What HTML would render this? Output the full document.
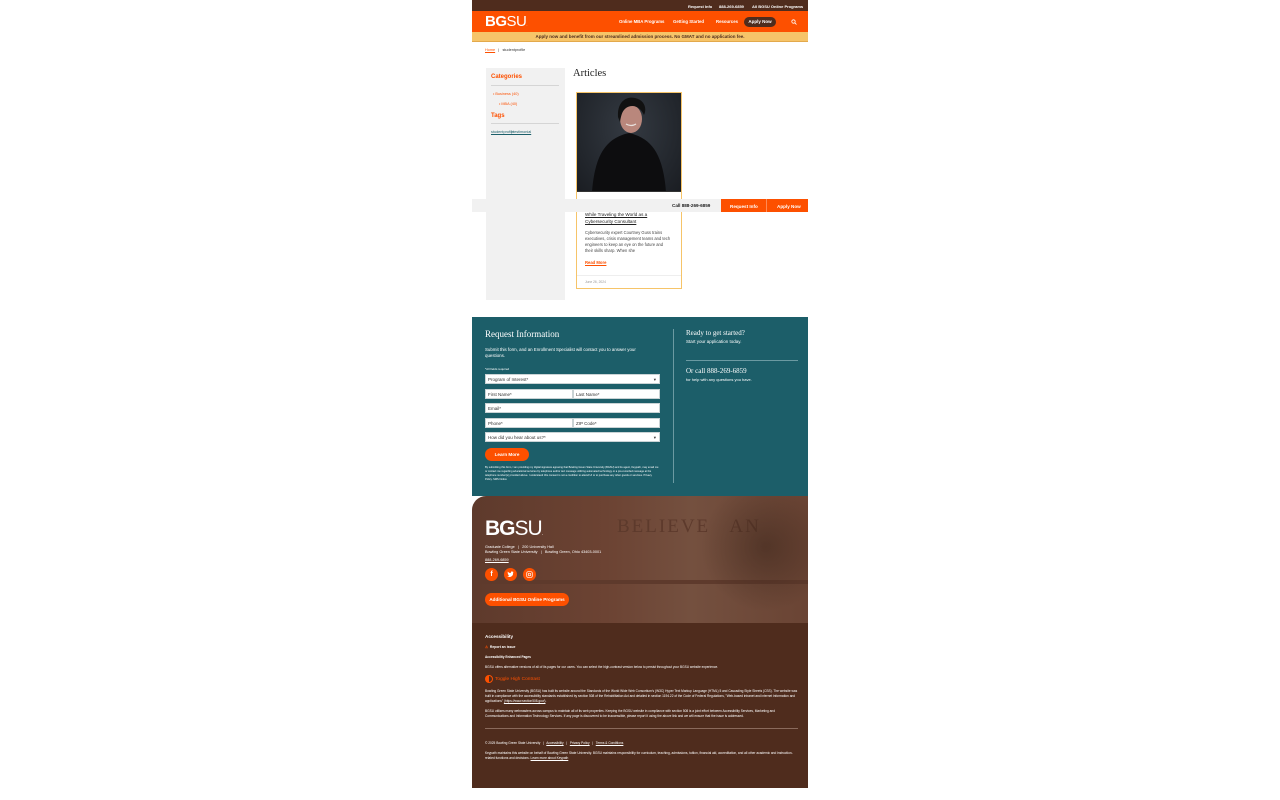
<!DOCTYPE html>
<html><head><meta charset="utf-8"><style>
*{margin:0;padding:0;box-sizing:border-box}
body{width:1280px;height:800px;background:#fff;font-family:"Liberation Sans",sans-serif;position:relative;overflow:hidden}
.a{position:absolute}
.serif{font-family:"Liberation Serif",serif}
.t{font-size:4px;color:#fff;white-space:nowrap}
input,.f{position:absolute;background:#fff;border:1px solid #c9d3d5;height:10px;font-size:4.5px;color:#333;padding-left:2px;line-height:9px}
</style></head><body>
<!-- top bar -->
<div class="a" style="left:472px;top:0;width:336px;height:11px;background:#4f2c1d"></div>
<div class="a t" style="left:688px;top:3.5px;font-weight:bold">Request Info</div>
<div class="a t" style="left:719px;top:3.5px;font-weight:bold">888-269-6859</div>
<div class="a t" style="left:752px;top:3.5px;font-weight:bold">All BGSU Online Programs</div>
<!-- nav -->
<div class="a" style="left:472px;top:11px;width:336px;height:21px;background:#fd5000"></div>
<div class="a" style="left:485px;top:13px;color:#fff;font-size:15px;line-height:17px;letter-spacing:-0.5px"><b>BG</b>SU<span style="font-size:4px">.</span></div>
<div class="a t" style="left:619px;top:19px;font-size:4.3px;font-weight:bold">Online MBA Programs</div>
<div class="a t" style="left:673px;top:19px;font-size:4.3px;font-weight:bold">Getting Started</div>
<div class="a t" style="left:716px;top:19px;font-size:4.3px;font-weight:bold">Resources</div>
<div class="a" style="left:744px;top:17px;width:32px;height:10px;border-radius:5px;background:#4f2c1d;color:#fff;font-size:4.5px;font-weight:bold;text-align:center;line-height:10px">Apply Now</div>
<svg class="a" style="left:791px;top:19px" width="6" height="6" viewBox="0 0 6 6"><circle cx="2.5" cy="2.5" r="1.7" stroke="#fff" stroke-width="0.8" fill="none"/><path d="M3.8 3.8L5.5 5.5" stroke="#fff" stroke-width="0.8"/></svg>
<div class="a" style="left:472px;top:32px;width:336px;height:10px;background:#f6c469;border-bottom:1px solid #e3a94c;font-size:4.5px;color:#4f2c1d;text-align:center;line-height:10px;font-weight:bold">Apply now and benefit from our streamlined admission process. No GMAT and no application fee.</div>
<!-- breadcrumb -->
<div class="a" style="left:485px;top:48px;font-size:3.8px;color:#333"><span style="color:#fd5000;text-decoration:underline">Home</span> &nbsp; | &nbsp; studentprofile</div>
<!-- sidebar -->
<div class="a" style="left:486px;top:68px;width:79px;height:232px;background:#f1f1f1"></div>
<div class="a" style="left:491px;top:74px;font-size:6px;color:#fd5000;font-weight:bold">Categories</div>
<div class="a" style="left:491px;top:85px;width:68px;height:1px;background:#d5d5d5"></div>
<div class="a" style="left:493px;top:92px;font-size:3.8px;color:#fd5000">• Business (40)</div>
<div class="a" style="left:499px;top:102px;font-size:3.8px;color:#fd5000">• MBA (40)</div>
<div class="a" style="left:491px;top:113px;font-size:6px;color:#fd5000;font-weight:bold">Tags</div>
<div class="a" style="left:491px;top:123px;width:68px;height:1px;background:#d5d5d5"></div>
<div class="a" style="left:491px;top:130px;font-size:3.8px;color:#1b5f6a;text-decoration:underline">studentprofile</div>
<div class="a" style="left:511px;top:130px;font-size:3.8px;color:#1b5f6a">| <u>testimonial</u></div>
<!-- articles -->
<div class="a serif" style="left:573px;top:68px;font-size:10.5px;color:#222">Articles</div>
<div class="a" style="left:576px;top:92px;width:106px;height:197px;border:1px solid #f6c469;background:#fff"></div>
<div class="a" style="left:577px;top:93px;width:104px;height:99px;background:radial-gradient(ellipse at 50% 35%,#343a42,#22262c 70%,#1a1d22);overflow:hidden">
<svg width="104" height="99" viewBox="0 0 104 99"><path d="M15 99 C18 60 30 45 52 40 C74 45 86 60 89 99Z" fill="#0d0d0f"/><ellipse cx="54" cy="26" rx="11" ry="14" fill="#b9877c"/><path d="M41 24 C40 8 50 3 58 5 C68 7 70 16 67 22 C63 13 55 11 49 15 C45 18 44 23 43 29Z" fill="#111"/><path d="M49 31 Q54 34 59 31" stroke="#e8e0dc" stroke-width="1.2" fill="none"/></svg>
<div class="a" style="left:0;bottom:0;width:104px;height:1.5px;background:#333"></div></div>
<div class="a" style="left:585px;top:211px;font-size:4.6px;color:#222;text-decoration:underline;line-height:7px">While Traveling the World as a<br>Cybersecurity Consultant</div>
<div class="a" style="left:585px;top:230px;font-size:4.1px;color:#444;line-height:6px">Cybersecurity expert Courtney Guss trains<br>executives, crisis management teams and tech<br>engineers to keep an eye on the future and<br>their skills sharp. When she</div>
<div class="a" style="left:585px;top:260px;font-size:4.2px;color:#fd5000;font-weight:bold;text-decoration:underline">Read More</div>
<div class="a" style="left:577px;top:275px;width:104px;height:1px;background:#eee"></div>
<div class="a" style="left:585px;top:280px;font-size:3.3px;color:#999">June 26, 2024</div>
<!-- sticky bar -->
<div class="a" style="left:472px;top:199px;width:249px;height:13px;background:#f1f1f1"></div>
<div class="a" style="left:672px;top:203px;font-size:4.6px;font-weight:bold;color:#222">Call 888-269-6859</div>
<div class="a" style="left:721px;top:199px;width:87px;height:13px;background:#fd5000"></div>
<div class="a" style="left:766px;top:199px;width:1px;height:13px;background:#ff8a55"></div>
<div class="a t" style="left:730px;top:203.5px;font-size:4.6px;font-weight:bold">Request Info</div>
<div class="a t" style="left:777px;top:203.5px;font-size:4.6px;font-weight:bold">Apply Now</div>
<!-- teal form -->
<div class="a" style="left:472px;top:317px;width:336px;height:179px;background:#1c5e69"></div>
<div class="a serif" style="left:485px;top:329px;font-size:9px;color:#fff">Request Information</div>
<div class="a" style="left:485px;top:347px;font-size:4.4px;color:#fff;line-height:6px">Submit this form, and an Enrollment Specialist will contact you to answer your<br>questions.</div>
<div class="a t" style="left:485px;top:367px;font-size:3px">*All fields required</div>
<div class="f" style="left:485px;top:374px;width:175px">Program of Interest*<span style="float:right;margin-right:3px">▾</span></div>
<div class="f" style="left:485px;top:389px;width:88px">First Name*</div>
<div class="f" style="left:573px;top:389px;width:87px">Last Name*</div>
<div class="f" style="left:485px;top:403px;width:175px">Email*</div>
<div class="f" style="left:485px;top:418px;width:88px">Phone*</div>
<div class="f" style="left:573px;top:418px;width:87px">ZIP Code*</div>
<div class="f" style="left:485px;top:432px;width:175px">How did you hear about us?*<span style="float:right;margin-right:3px">▾</span></div>
<div class="a" style="left:485px;top:448px;width:44px;height:13px;border-radius:7px;background:#fd5000;color:#fff;font-size:4.6px;font-weight:bold;text-align:center;line-height:13px">Learn More</div>
<div class="a" style="left:485px;top:466px;width:175px;font-size:2.6px;color:#fff;line-height:4px">By submitting this form, I am providing my digital signature agreeing that Bowling Green State University (BGSU) and its agent, Keypath, may email me or contact me regarding educational services by telephone and/or text message utilizing automated technology or a pre-recorded message at the telephone number(s) provided above. I understand this consent is not a condition to attend UI or to purchase any other goods or services. Privacy Policy. SMS Notice</div>
<div class="a" style="left:673px;top:329px;width:1px;height:154px;background:#6b9aa2"></div>
<div class="a serif" style="left:686px;top:329px;font-size:7px;color:#fff">Ready to get started?</div>
<div class="a t" style="left:686px;top:339px;font-size:4.5px">Start your application today.</div>
<div class="a" style="left:686px;top:360px;width:112px;height:1px;background:#6b9aa2"></div>
<div class="a serif" style="left:686px;top:367px;font-size:7px;color:#fff">Or call 888-269-6859</div>
<div class="a t" style="left:686px;top:377px;font-size:4px">for help with any questions you have.</div>
<!-- footer photo -->
<div class="a" style="left:472px;top:496px;width:336px;height:127px;background:linear-gradient(90deg,#5e3a2c 0%,#6c4333 40%,#74503f 65%,#6a4434 100%);border-top-left-radius:14px;overflow:hidden">
<div class="a serif" style="left:145px;top:20px;font-size:19px;color:#5d3a2c;letter-spacing:2px">BELIEVE &nbsp; AN</div>
<div class="a" style="left:0;top:84px;width:336px;height:4px;background:#5e3a2c"></div>
<div class="a" style="left:230px;top:0;width:106px;height:127px;background:radial-gradient(circle at 60% 40%,rgba(50,30,20,.45),transparent 65%)"></div>
</div>
<div class="a" style="left:485px;top:517px;color:#fff;font-size:21px;line-height:24px;letter-spacing:-1px"><b>BG</b>SU<span style="font-size:5px">.</span></div>
<div class="a t" style="left:485px;top:545px;font-size:3.8px;line-height:4.5px">Graduate College &nbsp; | &nbsp; 200 University Hall<br>Bowling Green State University &nbsp; | &nbsp; Bowling Green, Ohio 43403-0001</div>
<div class="a t" style="left:485px;top:558px;font-size:3.8px;text-decoration:underline">888-269-6859</div>
<div class="a" style="left:485px;top:568px;width:13px;height:13px;border-radius:50%;background:#fd5000;color:#fff;font-size:7px;font-weight:bold;text-align:center;line-height:13px">f</div>
<svg class="a" style="left:504px;top:568px" width="13" height="13" viewBox="0 0 13 13"><circle cx="6.5" cy="6.5" r="6.5" fill="#fd5000"/><path d="M3.5 8.5c2 1 4.5.5 5.5-2l.1-2 .7-.6-.8.1-.6-.5c-1-.3-1.8.5-1.6 1.5-1.3 0-2.4-.6-3-1.4-.4.8 0 1.6.5 1.9l-.6-.1c0 .7.5 1.2 1.1 1.4l-.6.1c.2.5.7.8 1.2.8-.6.5-1.300.6-2 .5z" fill="#fff"/></svg>
<svg class="a" style="left:523px;top:568px" width="13" height="13" viewBox="0 0 13 13"><circle cx="6.5" cy="6.5" r="6.5" fill="#fd5000"/><rect x="3.7" y="3.7" width="5.6" height="5.6" rx="1.6" stroke="#fff" stroke-width="0.7" fill="none"/><circle cx="6.5" cy="6.5" r="1.3" stroke="#fff" stroke-width="0.7" fill="none"/></svg>
<div class="a" style="left:485px;top:593px;width:84px;height:13px;border-radius:7px;background:#fd5000;color:#fff;font-size:4.6px;font-weight:bold;text-align:center;line-height:13px">Additional BGSU Online Programs</div>
<!-- accessibility -->
<div class="a" style="left:472px;top:623px;width:336px;height:165px;background:#4f2c1d"></div>
<div class="a t" style="left:485px;top:634px;font-size:4.6px;font-weight:bold">Accessibility</div>
<div class="a t" style="left:485px;top:645px;font-size:3.4px;font-weight:bold"><span style="color:#fd5000">⚠</span> &nbsp;Report an issue</div>
<div class="a t" style="left:485px;top:655px;font-size:3.2px;font-weight:bold">Accessibility Enhanced Pages</div>
<div class="a t" style="left:485px;top:665px;font-size:3.2px">BGSU offers alternative versions of all of its pages for our users. You can select the high-contrast version below to persist throughout your BGSU website experience.</div>
<div class="a" style="left:485px;top:675px;width:8px;height:8px;border-radius:50%;border:1px solid #fd5000;background:linear-gradient(90deg,#fd5000 50%,transparent 50%)"></div>
<div class="a" style="left:495px;top:677px;font-size:4.8px;color:#fd5000">Toggle High Contrast</div>
<div class="a" style="left:485px;top:689px;width:313px;font-size:3.2px;color:#fff;line-height:4.8px">Bowling Green State University (BGSU) has built its website around the Standards of the World Wide Web Consortium's (W3C) Hyper Text Markup Language (HTML) 5 and Cascading Style Sheets (CSS). The website was built in compliance with the accessibility standards established by section 508 of the Rehabilitation Act and detailed in section 1194.22 of the Code of Federal Regulations, "Web-based intranet and internet information and applications" <u>(https://www.section508.gov/)</u>.</div>
<div class="a" style="left:485px;top:709px;width:313px;font-size:3.2px;color:#fff;line-height:4.8px">BGSU utilizes many webmasters across campus to maintain all of its web properties. Keeping the BGSU website in compliance with section 508 is a joint effort between Accessibility Services, Marketing and Communications and Information Technology Services. If any page is discovered to be inaccessible, please report it using the above link and we will ensure that the issue is addressed.</div>
<div class="a" style="left:485px;top:728px;width:313px;height:1px;background:#8a6a5c"></div>
<div class="a t" style="left:485px;top:741px;font-size:3.2px">© 2025 Bowling Green State University &nbsp; | &nbsp; <u>Accessibility</u> &nbsp; | &nbsp; <u>Privacy Policy</u> &nbsp; | &nbsp; <u>Terms &amp; Conditions</u></div>
<div class="a" style="left:485px;top:751px;width:313px;font-size:3.2px;color:#fff;line-height:4.8px">Keypath maintains this website on behalf of Bowling Green State University. BGSU maintains responsibility for curriculum, teaching, admissions, tuition, financial aid, accreditation, and all other academic and instruction-related functions and decisions. <u>Learn more about Keypath</u></div>
</body></html>
